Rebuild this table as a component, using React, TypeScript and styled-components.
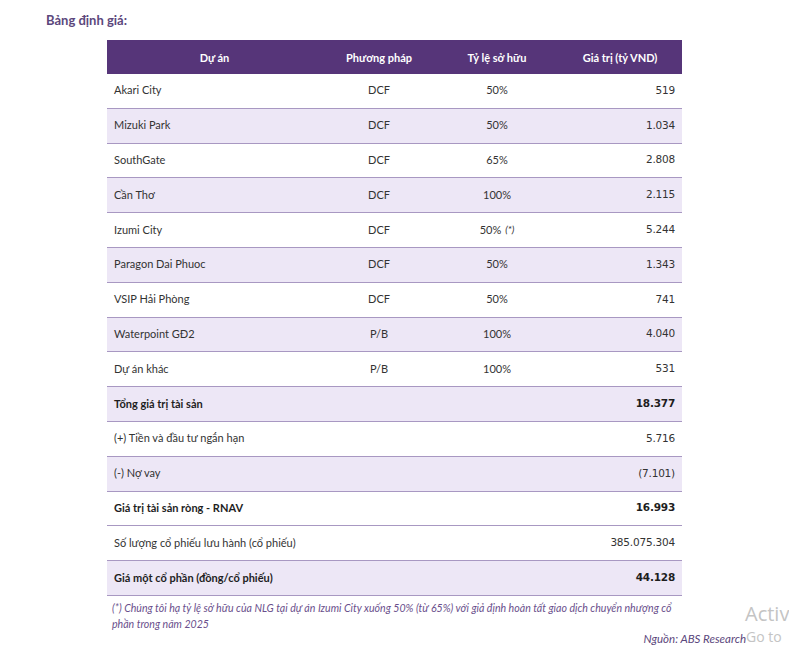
import React from "react";
import styled, { createGlobalStyle } from "styled-components";

const Global = createGlobalStyle`
  html, body { margin: 0; padding: 0; background: #ffffff; }
  body { font-family: "Lato", "Noto Sans", sans-serif; color: #333333; }
`;

const Page = styled.div`
  position: relative;
  width: 789px;
  height: 646px;
  overflow: hidden;
  background: #ffffff;
`;

const Title = styled.div`
  padding: 12px 0 0 46px;
  height: 40px;
  box-sizing: border-box;
  font-size: 13px;
  font-weight: 700;
  color: #5b477c;
  line-height: 16px;
`;

const Table = styled.div`
  margin-left: 107px;
  width: 575px;
  display: grid;
  grid-template-columns: 215px 114px 122px 124px;
`;

const Head = styled.div`
  background: #563579;
  color: #ffffff;
  height: 34px;
  display: flex;
  align-items: center;
  justify-content: center;
  font-size: 11px;
  font-weight: 700;
`;

const Cell = styled.div<{ $shade: boolean; $align: "left" | "center" | "right"; $bold?: boolean; $num?: boolean }>`
  height: 33.8px;
  box-sizing: border-box;
  height: 34.8px;
  border-bottom: 1px solid #a898c2;
  background: ${(p) => (p.$shade ? "#ede7f6" : "#ffffff")};
  display: flex;
  align-items: center;
  justify-content: ${(p) => (p.$align === "left" ? "flex-start" : p.$align === "right" ? "flex-end" : "center")};
  padding: 0 7px 2px 7px;
  font-size: 11px;
  font-family: ${(p) => (p.$num ? '"DejaVu Sans", "Noto Sans", sans-serif' : '"Lato", "Noto Sans", sans-serif')};
  font-weight: ${(p) => (p.$bold ? 700 : 400)};
  color: ${(p) => (p.$bold ? "#1e1e1e" : "#333333")};
  white-space: nowrap;
`;

const NumText = styled.span`
  font-size: 10.5px;
  letter-spacing: -0.2px;
`;

const Star = styled.i`
  margin-left: 4px;
  font-size: 10px;
`;

const Footer = styled.div`
  padding: 4px 0 0 112px;
  width: 570px;
  font-size: 10.6px;
  font-style: italic;
  color: #6a4f8c;
  line-height: 16px;
`;

const Source = styled.div`
  width: 746px;
  text-align: right;
  font-size: 11.5px;
  font-style: italic;
  color: #5b477c;
  line-height: 16px;
  margin-top: -1px;
`;

const Watermark = styled.div`
  position: absolute;
  left: 745px;
  top: 600px;
  color: #c4c4c4;
  font-family: "Open Sans", "Noto Sans", sans-serif;
  white-space: nowrap;
`;

const WLine1 = styled.div`
  font-size: 20px;
  line-height: 27px;
`;

const WLine2 = styled.div`
  font-size: 14px;
  line-height: 20px;
  margin-left: 1px;
`;

type Row = { name: string; method?: string; own?: string; star?: boolean; value: string; bold?: boolean; shade: boolean };

const rows: Row[] = [
  { name: "Akari City", method: "DCF", own: "50%", value: "519", shade: false },
  { name: "Mizuki Park", method: "DCF", own: "50%", value: "1.034", shade: true },
  { name: "SouthGate", method: "DCF", own: "65%", value: "2.808", shade: false },
  { name: "Cần Thơ", method: "DCF", own: "100%", value: "2.115", shade: true },
  { name: "Izumi City", method: "DCF", own: "50%", star: true, value: "5.244", shade: false },
  { name: "Paragon Dai Phuoc", method: "DCF", own: "50%", value: "1.343", shade: true },
  { name: "VSIP Hải Phòng", method: "DCF", own: "50%", value: "741", shade: false },
  { name: "Waterpoint GĐ2", method: "P/B", own: "100%", value: "4.040", shade: true },
  { name: "Dự án khác", method: "P/B", own: "100%", value: "531", shade: false },
  { name: "Tổng giá trị tài sản", value: "18.377", bold: true, shade: true },
  { name: "(+) Tiền và đầu tư ngắn hạn", value: "5.716", shade: false },
  { name: "(-) Nợ vay", value: "(7.101)", shade: true },
  { name: "Giá trị tài sản ròng - RNAV", value: "16.993", bold: true, shade: false },
  { name: "Số lượng cổ phiếu lưu hành (cổ phiếu)", value: "385.075.304", shade: false },
  { name: "Giá một cổ phần (đồng/cổ phiếu)", value: "44.128", bold: true, shade: true },
];

export default function App() {
  return (
    <Page>
      <Global />
      <Title>Bảng định giá:</Title>
      <Table>
        <Head>Dự án</Head>
        <Head>Phương pháp</Head>
        <Head>Tỷ lệ sở hữu</Head>
        <Head>Giá trị (tỷ VND)</Head>
        {rows.map((r) => (
          <React.Fragment key={r.name}>
            <Cell $shade={r.shade} $align="left" $bold={r.bold}>{r.name}</Cell>
            <Cell $shade={r.shade} $align="center">{r.method ?? ""}</Cell>
            <Cell $shade={r.shade} $align="center">
              {r.own ?? ""}
              {r.star ? <Star>(*)</Star> : null}
            </Cell>
            <Cell $shade={r.shade} $align="right" $bold={r.bold} $num>
              <NumText>{r.value}</NumText>
            </Cell>
          </React.Fragment>
        ))}
      </Table>
      <Footer>
        (*) Chúng tôi hạ tỷ lệ sở hữu của NLG tại dự án Izumi City xuống 50% (từ 65%) với giả định hoàn tất giao dịch chuyển nhượng cổ phần trong năm 2025
      </Footer>
      <Source>Nguồn: ABS Research</Source>
      <Watermark>
        <WLine1>Activ</WLine1>
        <WLine2>Go to</WLine2>
      </Watermark>
    </Page>
  );
}
